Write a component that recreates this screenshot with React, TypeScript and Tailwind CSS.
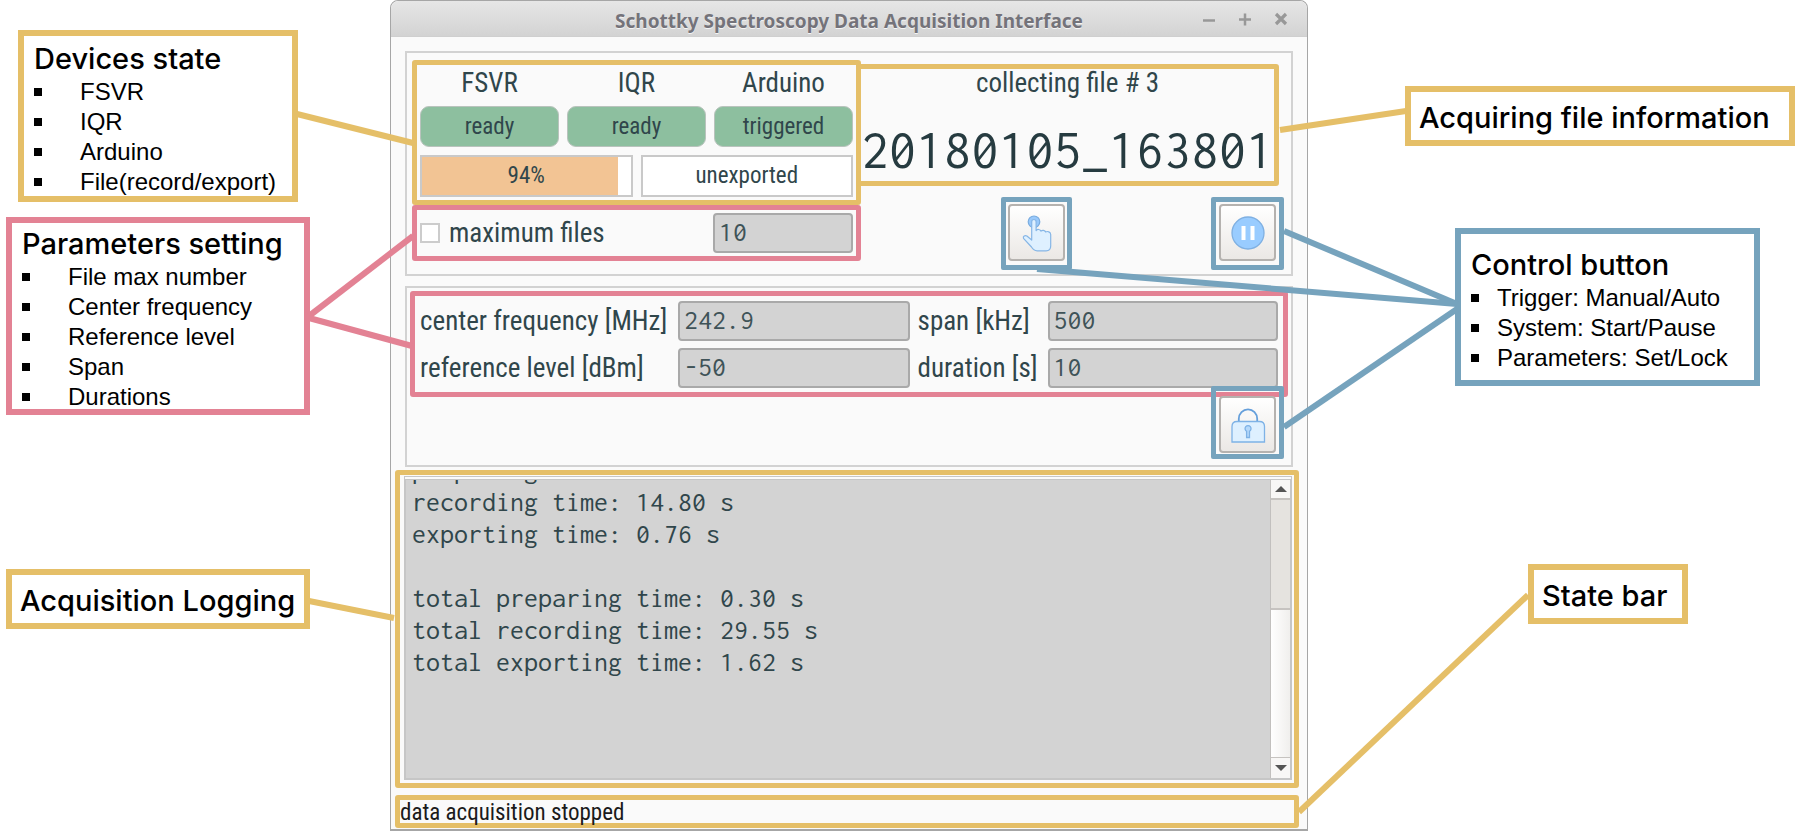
import React from 'react';

const ui = "font-['Roboto_Condensed','Roboto',sans-serif]";
const mono = "font-['Inconsolata','Liberation_Mono',monospace]";

const fieldClass =
  "w-full min-w-0 h-10 rounded-[4px] border-2 border-[#a9a9a9] bg-[#d3d3d3] px-1 pb-[2px] text-[28px] text-[#3f5358] outline-none font-['Inconsolata','Liberation_Mono',monospace]";

function Callout({ title, items, className, indent }: { title: string; items?: string[]; className: string; indent?: string }) {
  return (
    <section className={`border-6 bg-white text-black ${className}`}>
      <h2
        className={`whitespace-nowrap font-['Inter',sans-serif] text-[29px] font-medium ${items ? 'leading-9' : 'pt-1 leading-[44px]'}`}
      >
        {title}
      </h2>
      {items && (
        <ul className="font-['Liberation_Sans',Arial,sans-serif] text-[24px] leading-[30px]">
          {items.map((item) => (
            <li key={item} className={`flex items-center whitespace-nowrap ${indent}`}>
              <span className="size-2 shrink-0 bg-black" />
              {item}
            </li>
          ))}
        </ul>
      )}
    </section>
  );
}

function Device({ name, state }: { name: string; state: string }) {
  return (
    <div className="flex min-w-0 flex-1 flex-col text-center">
      <span className="h-[41px] text-[27px] leading-9">{name}</span>
      <span className="h-[41px] rounded-[9px] border border-[#b9c3bd] bg-[#8dbf9f] text-[23px] leading-[40px]">{state}</span>
    </div>
  );
}

function IconButton({ label, children }: { label: string; children: React.ReactNode }) {
  return (
    <button
      type="button"
      aria-label={label}
      className="flex size-[57px] items-center justify-center rounded-[4px] border-2 border-[#b5b2af] bg-linear-to-b from-white to-[#ebe8e5]"
    >
      {children}
    </button>
  );
}

function TouchIcon() {
  return (
    <svg viewBox="0 0 40 40" className="size-10" strokeLinejoin="round">
      <circle cx="17" cy="8.8" r="5.8" fill="#99c9fb" stroke="#79acdf" strokeWidth="1.2" />
      <path
        d="M14.7 8.7a2.2 2.2 0 0 1 4.4 0V17.6c1-1.7 4.4-1.5 4.8.6 1.2-1.5 4.2-1.1 4.7.8 2-1.2 5 0 5.1 2.4V33c0 3-2 4.8-4.6 4.8h-9c-2.7 0-4.3-1.5-5.6-3.8L6.5 25.4c-.8-2 1.5-3.5 3.4-2.4l4.8 4z"
        fill="#def0ff"
        stroke="#86b6e6"
        strokeWidth="1.2"
      />
    </svg>
  );
}

function PauseIcon() {
  return (
    <svg viewBox="0 0 40 40" className="size-10">
      <circle cx="20" cy="20" r="16" fill="#99ccff" stroke="#7fb0e2" strokeWidth="1.3" />
      <rect x="13.5" y="13" width="4" height="14" fill="#fff" />
      <rect x="22.5" y="13" width="4" height="14" fill="#fff" />
    </svg>
  );
}

function LockIcon() {
  return (
    <svg viewBox="0 0 40 40" className="size-10" fill="none" stroke="#7eb2e6" strokeWidth="1.3">
      <path d="M10.8 16.5V13.8a9.2 9.5 0 0 1 18.4 0V16.500" stroke="#659fdb" strokeWidth="1.8" />
      <path d="M4 37V21.500q0-5 5-5H31.500q5 0 5 5V37z" fill="#def0ff" />
      <path d="M18.600 26.200a3 3 0 1 1 2.900 0V32.500h-2.900z" fill="#b5d9fb" />
    </svg>
  );
}

function Connectors() {
  return (
    <svg
      viewBox="0 0 1798 831"
      preserveAspectRatio="none"
      className="pointer-events-none absolute inset-0 h-full w-full"
      fill="none"
      strokeWidth="6"
      aria-hidden="true"
    >
      <g stroke="#e5bf68">
        <path d="M297 114L413 143" />
        <path d="M309 601L394 618" />
        <path d="M1280 130L1406 111" />
        <path d="M1299 812L1528 595" />
      </g>
      <g stroke="#e38294">
        <path d="M413 236L309 316" />
        <path d="M309 318L412 346" />
      </g>
      <g stroke="#76a3bd">
        <path d="M1284 231L1457 304" />
        <path d="M1037 269L1457 304" />
        <path d="M1284 427L1457 309" />
      </g>
    </svg>
  );
}

const logLines = [
  'preparing time: 0.15 s',
  'recording time: 14.80 s',
  'exporting time: 0.76 s',
  '',
  'total preparing time: 0.30 s',
  'total recording time: 29.55 s',
  'total exporting time: 1.62 s',
];

const parameters = [
  ['center frequency [MHz]', '242.9'],
  ['span [kHz]', '500'],
  ['reference level [dBm]', '-50'],
  ['duration [s]', '10'],
];

function AcquisitionWindow() {
  return (
    <main className={`flex min-w-0 flex-col rounded-t-lg border border-b-2 border-[#a6a6a6] bg-[#fafafa] text-[#30464b] ${ui}`}>
      <header className="relative flex h-9 items-center justify-center rounded-t-lg border-b border-[#cfcfcf] bg-linear-to-b from-[#e6e6e6] to-[#d3d3d3]">
        <h1 className="pt-1 font-['Noto_Sans',sans-serif] text-[19px] leading-7 font-bold whitespace-nowrap text-[#74737a] [text-shadow:0_1px_0_#f5f5f5]">
          Schottky Spectroscopy Data Acquisition Interface
        </h1>
        <div className="absolute right-[18px] flex gap-5 text-[#989898]">
          <button type="button" aria-label="Minimize">
            <svg viewBox="0 0 16 16" className="size-4" stroke="currentColor" strokeWidth="2.5"><path d="M2 9.500H14" /></svg>
          </button>
          <button type="button" aria-label="Maximize">
            <svg viewBox="0 0 16 16" className="size-4" stroke="currentColor" strokeWidth="2.5"><path d="M2 8.500H14M8 2.500V14.500" /></svg>
          </button>
          <button type="button" aria-label="Close">
            <svg viewBox="0 0 16 16" className="size-4" stroke="currentColor" strokeWidth="3.2"><path d="M3 3L13 13M13 3L3 13" /></svg>
          </button>
        </div>
      </header>

      <section className="mx-[14px] mt-[14px] flex border-2 border-[#d2d2d2] px-[5px] pt-[7px] pb-1">
        <div className="flex w-[449px] shrink-0 flex-col">
          <div className="flex h-[145px] flex-col rounded-[3px] border-5 border-[#e5bf68] px-[3px]">
            <div className="flex gap-2">
              <Device name="FSVR" state="ready" />
              <Device name="IQR" state="ready" />
              <Device name="Arduino" state="triggered" />
            </div>
            <div className="mt-2 flex gap-2 text-center text-[23px] leading-[38px]">
              <div
                role="progressbar"
                aria-label="record"
                aria-valuenow={94}
                className="flex-1 border-2 border-[#c9c9c9] bg-linear-to-r from-[#f2c494] from-94% to-white to-94%"
              >
                94%
              </div>
              <div className="flex-1 border-2 border-[#c9c9c9] bg-white">unexported</div>
            </div>
          </div>
          <div className="flex h-14 items-center rounded-[3px] border-5 border-[#e38294] px-[3px]">
            <label className="flex flex-1 items-center gap-[9px] text-[27px]">
              <input type="checkbox" className="size-5 appearance-none border-2 border-[#cccccc] bg-white" />
              maximum files
            </label>
            <div className="flex w-[140px]">
              <input aria-label="maximum files count" defaultValue="10" className={fieldClass} />
            </div>
          </div>
        </div>

        <div className="-ml-[5px] flex min-w-0 flex-1 flex-col pt-1">
          <div className="mr-[7px] flex h-[122px] flex-col rounded-[3px] border-5 border-[#e5bf68] text-center whitespace-nowrap">
            <span className="text-[27px] leading-[29px]">collecting file # 3</span>
            <span className={`mt-[22px] text-[55px] leading-[60px] text-[#263b40] ${mono}`}>20180105_163801</span>
          </div>
          <div className="mt-[11px] mr-[2px] flex justify-end gap-[139px]">
            <div className="rounded-[2px] border-5 border-[#76a3bd] p-[2px] pb-1">
              <IconButton label="Manual trigger"><TouchIcon /></IconButton>
            </div>
            <div className="rounded-[2px] border-5 border-[#76a3bd] px-[3px] pt-[2px] pb-1">
              <IconButton label="Pause"><PauseIcon /></IconButton>
            </div>
          </div>
        </div>
      </section>

      <section className="mx-[14px] mt-[10px] flex flex-col border-2 border-[#d2d2d2] px-[3px] pt-[3px] pb-[6px]">
        <div className="grid grid-cols-[489fr_360fr] gap-x-2 gap-y-[7px] rounded-[3px] border-5 border-[#e38294] px-[5px] pt-[5px] pb-1">
          {parameters.map(([name, value], i) => (
            <label
              key={name}
              className={`grid items-center text-[27px] leading-10 whitespace-nowrap ${i % 2 ? 'grid-cols-[130px_1fr]' : 'grid-cols-[258px_1fr]'}`}
            >
              {name}
              <input defaultValue={value} className={fieldClass} />
            </label>
          ))}
        </div>
        <div className="relative -mt-[11px] mr-1 self-end rounded-[2px] border-5 border-[#76a3bd] px-[3px] pt-[5px] pb-px">
          <IconButton label="Lock parameters"><LockIcon /></IconButton>
        </div>
      </section>

      <section className="mt-[3px] mr-2 ml-1 flex h-[318px] rounded-[3px] border-5 border-[#e5bf68] bg-[#fafafa] pt-px pr-[2px] pb-[3px] pl-1">
        <div className="flex min-w-0 flex-1 border-2 border-t-4 border-double border-[#c6c6c6]">
          <div role="log" className={`min-w-0 flex-1 overflow-hidden bg-[#d3d3d3] pl-[6px] text-[28px] text-[#30464b] ${mono}`}>
            <div className="-mt-[26px]">
              {logLines.map((line, i) => (
                <p key={i} className="h-8 leading-8 whitespace-pre">{line}</p>
              ))}
            </div>
          </div>
          <div className="flex w-5 flex-col border-l border-[#c2c0be] bg-[#e5e3df]">
            <button type="button" aria-label="Scroll up" className="flex h-5 items-center justify-center border-b-2 border-[#c6c3c0] bg-[#f8f7f6]">
              <svg viewBox="0 0 12 6" className="h-[6px] w-3" fill="#555"><path d="M0 6L6 0L12 6z" /></svg>
            </button>
            <div className="mt-[108px] flex-1 border-t-2 border-[#c6c3c0] bg-linear-to-r from-white to-[#f0efed]" />
            <button type="button" aria-label="Scroll down" className="flex h-[21px] items-center justify-center border-t border-[#c6c3c0] bg-[#f8f7f6]">
              <svg viewBox="0 0 12 6" className="h-[6px] w-3" fill="#555"><path d="M0 0L6 6L12 0z" /></svg>
            </button>
          </div>
        </div>
      </section>

      <footer className="mt-[7px] mr-2 mb-px ml-1 h-[33px] rounded-[3px] border-5 border-[#e5bf68] text-[23px] leading-[25px] text-[#1b1b1b]">
        data acquisition stopped
      </footer>
    </main>
  );
}

export default function App() {
  return (
    <div className="relative grid grid-cols-[390fr_918fr_490fr] bg-white">
      <aside className="flex min-w-0 flex-col items-start pt-[30px]">
        <Callout
          title="Devices state"
          items={['FSVR', 'IQR', 'Arduino', 'File(record/export)']}
          className="ml-[18px] h-[172px] w-[280px] border-[#e5bf68] pt-[5px] pl-[10px]"
          indent="gap-[38px]"
        />
        <Callout
          title="Parameters setting"
          items={['File max number', 'Center frequency', 'Reference level', 'Span', 'Durations']}
          className="mt-[15px] ml-[6px] h-[198px] w-[304px] border-[#e38294] pt-[3px] pl-[10px]"
          indent="gap-[38px]"
        />
        <Callout title="Acquisition Logging" className="mt-[154px] ml-[6px] w-[304px] border-[#e5bf68] pl-[8px]" />
      </aside>
      <AcquisitionWindow />
      <aside className="flex min-w-0 flex-col items-start pt-[86px]">
        <Callout title="Acquiring file information" className="ml-[97px] w-[390px] border-[#e5bf68] pl-[8px]" />
        <Callout
          title="Control button"
          items={['Trigger: Manual/Auto', 'System: Start/Pause', 'Parameters: Set/Lock']}
          className="mt-[82px] ml-[147px] w-[305px] border-[#76a3bd] pt-[13px] pb-[7px] pl-[10px]"
          indent="gap-[18px]"
        />
        <Callout title="State bar" className="mt-[178px] ml-[220px] w-[160px] border-[#e5bf68] pl-[8px]" />
      </aside>
      <Connectors />
    </div>
  );
}
